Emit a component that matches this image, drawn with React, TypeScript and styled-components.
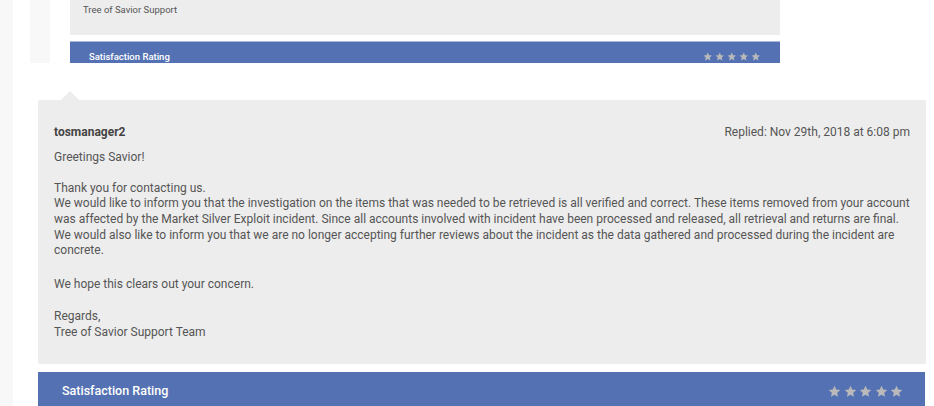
import React from "react";
import styled, { createGlobalStyle } from "styled-components";

const Global = createGlobalStyle`
  html, body { margin: 0; padding: 0; background: #fff; }
  body { font-family: Roboto, "Liberation Sans", Arial, sans-serif; }
`;

const Page = styled.div`
  display: flex;
  min-height: 406px;
  overflow: hidden;
`;

const Rail = styled.div`
  width: 13px;
  flex: none;
  background: #f8f8f8;
`;

const Main = styled.div`
  flex: 1;
  padding-left: 17px;
  display: flex;
  flex-direction: column;
`;

const PrevSection = styled.div`
  display: flex;
  height: 63px;
  flex: none;
  overflow: hidden;
`;

const PrevStrip = styled.div`
  width: 20px;
  flex: none;
  background: #f8f8f8;
`;

const PrevCard = styled.div`
  width: 710px;
  margin-left: 20px;
  display: flex;
  flex-direction: column;
`;

const PrevBody = styled.div`
  height: 35px;
  flex: none;
  background: #ededed;
  box-sizing: border-box;
  padding: 4px 13px 0;
  font-size: 9.5px;
  color: #555;
`;

const RatingBar = styled.div<{ $small?: boolean }>`
  display: flex;
  flex: none;
  align-items: flex-start;
  justify-content: space-between;
  background: #5472b3;
  color: #fff;
  font-weight: 500;
  box-sizing: border-box;
  ${(p) =>
    p.$small
      ? `
    margin-top: 6px;
    height: 30px;
    border-top: 1px solid #a9b8dc;
    padding: 9px 19.5px 0 19px;
    font-size: 9.5px;
    line-height: 12px;
  `
      : `
    margin-top: 9px;
    height: 40px;
    padding: 11px 22px 0 24px;
    font-size: 12.5px;
    line-height: 16px;
  `}
`;

const Stars = styled.div<{ $gap: number; $top: number }>`
  display: flex;
  gap: ${(p) => p.$gap}px;
  padding-top: ${(p) => p.$top}px;
`;

const Star = ({ size }: { size: number }) => (
  <svg width={size} height={size} viewBox="0 0 24 24">
    <polygon
      points="12,1.5 15.2,8.2 22.6,9 17,14.1 18.6,21.6 12,17.8 5.4,21.6 7,14.1 1.4,9 8.8,8.2"
      fill="#b9b9b9"
    />
  </svg>
);

const ReplyCard = styled.div`
  position: relative;
  flex: none;
  margin: 37px 8px 0 8px;
  width: 888px;
  box-sizing: border-box;
  background: #ededed;
  border-radius: 2px;
  padding: 25px 16px 23px 16px;
  color: #555;
  font-size: 12px;
  line-height: 15.6px;
  &::before {
    content: "";
    position: absolute;
    left: 23px;
    top: -9px;
    border-left: 9px solid transparent;
    border-right: 9px solid transparent;
    border-bottom: 9px solid #ededed;
  }
`;

const ReplyHead = styled.div`
  display: flex;
  justify-content: space-between;
  align-items: baseline;
  margin-bottom: 9px;
`;

const Author = styled.span`
  font-weight: 700;
  color: #444;
`;

const Meta = styled.span`
  color: #555;
`;

const Para = styled.p<{ $after?: number }>`
  margin: 0 0 ${(p) => p.$after ?? 15.6}px 0;
  &:last-child { margin-bottom: 0; }
`;

const BottomBar = styled(RatingBar)`
  width: 887px;
  margin-left: 8px;
  margin-top: 8px;
`;

export default function App() {
  return (
    <>
      <Global />
      <Page>
        <Rail />
        <Main>
          <PrevSection>
            <PrevStrip />
            <PrevCard>
              <PrevBody>Tree of Savior Support</PrevBody>
              <RatingBar $small>
                <span>Satisfaction Rating</span>
                <Stars $gap={2.5} $top={1}>
                  {[0, 1, 2, 3, 4].map((i) => (
                    <Star key={i} size={9.5} />
                  ))}
                </Stars>
              </RatingBar>
            </PrevCard>
          </PrevSection>
          <ReplyCard>
            <ReplyHead>
              <Author>tosmanager2</Author>
              <Meta>Replied: Nov 29th, 2018 at 6:08 pm</Meta>
            </ReplyHead>
            <Para>Greetings Savior!</Para>
            <Para $after={18.5}>
              Thank you for contacting us.
              <br />
              We would like to inform you that the investigation on the items that was needed to be retrieved is all verified and correct. These items removed from your account was affected by the Market Silver Exploit incident. Since all accounts involved with incident have been processed and released, all retrieval and returns are final. We would also like to inform you that we are no longer accepting further reviews about the incident as the data gathered and processed during the incident are concrete.
            </Para>
            <Para $after={16.5}>We hope this clears out your concern.</Para>
            <Para>
              Regards,
              <br />
              Tree of Savior Support Team
            </Para>
          </ReplyCard>
          <BottomBar>
            <span>Satisfaction Rating</span>
            <Stars $gap={2.5} $top={2.5}>
              {[0, 1, 2, 3, 4].map((i) => (
                <Star key={i} size={13} />
              ))}
            </Stars>
          </BottomBar>
        </Main>
      </Page>
    </>
  );
}
